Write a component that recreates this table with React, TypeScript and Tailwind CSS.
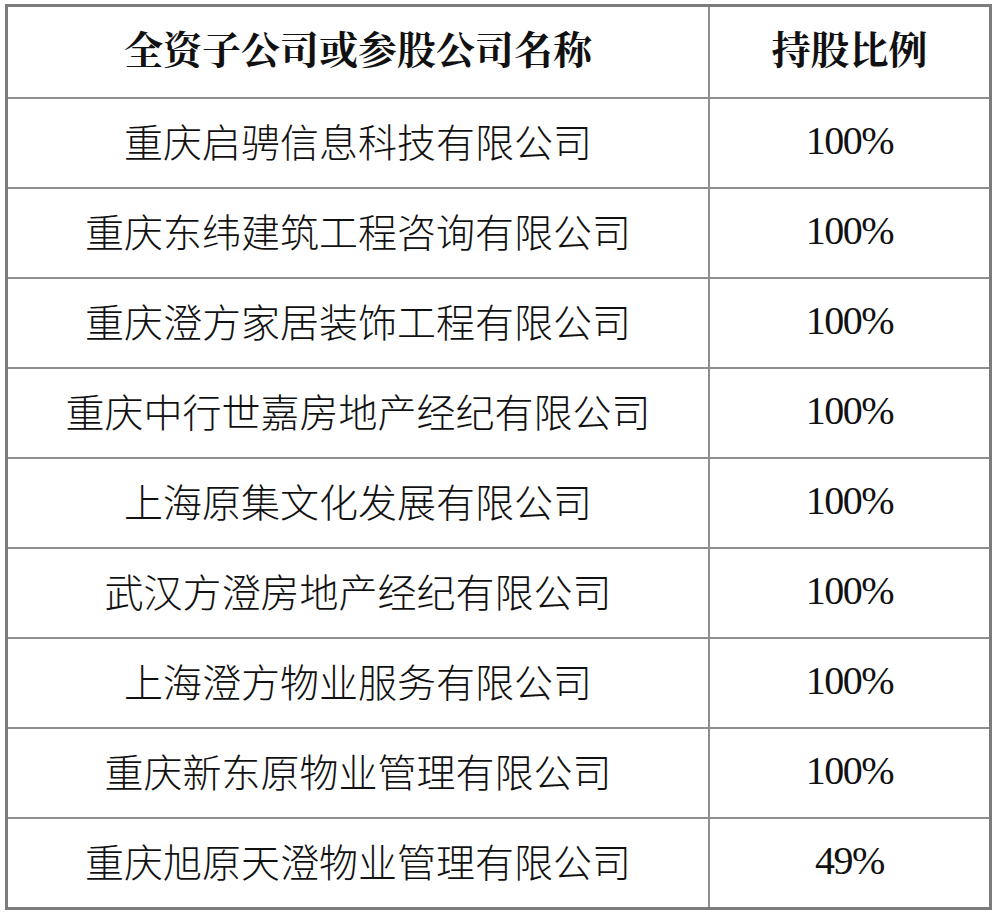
const rows = [
  { name: "重庆启骋信息科技有限公司", share: "100%" },
  { name: "重庆东纬建筑工程咨询有限公司", share: "100%" },
  { name: "重庆澄方家居装饰工程有限公司", share: "100%" },
  { name: "重庆中行世嘉房地产经纪有限公司", share: "100%" },
  { name: "上海原集文化发展有限公司", share: "100%" },
  { name: "武汉方澄房地产经纪有限公司", share: "100%" },
  { name: "上海澄方物业服务有限公司", share: "100%" },
  { name: "重庆新东原物业管理有限公司", share: "100%" },
  { name: "重庆旭原天澄物业管理有限公司", share: "49%" },
]

const cjk = "font-['Noto_Sans_CJK_SC',sans-serif]"

export default function App() {
  return (
    <div className="h-[917px] w-[1000px] bg-white pl-[5px] pt-[4px]">
      <div className="flex w-[987px] flex-col border-[3px] border-[#7c7c7c] text-[#111]">
        <div className="flex h-[90px]">
          <div className="flex w-[702px] items-center justify-center border-r-2 border-[#8e8e8e] pb-[10px] text-[39px] font-bold leading-none font-['Noto_Serif_CJK_SC','Noto_Sans_CJK_SC',serif]">
            全资子公司或参股公司名称
          </div>
          <div className="flex flex-1 items-center justify-center pb-[10px] text-[39px] font-bold leading-none font-['Noto_Serif_CJK_SC','Noto_Sans_CJK_SC',serif]">
            持股比例
          </div>
        </div>
        {rows.map((r) => (
          <div key={r.name} className="flex h-[90px] border-t-2 border-[#8e8e8e]">
            <div
              className={`flex w-[702px] items-center justify-center border-r-2 border-[#8e8e8e] pb-[6px] text-[39px] font-light leading-none ${cjk}`}
            >
              {r.name}
            </div>
            <div className="flex flex-1 items-center justify-center pb-[4px] text-[40px] leading-none tracking-[-1.5px] font-['Liberation_Serif',serif]">
              {r.share}
            </div>
          </div>
        ))}
      </div>
    </div>
  )
}
